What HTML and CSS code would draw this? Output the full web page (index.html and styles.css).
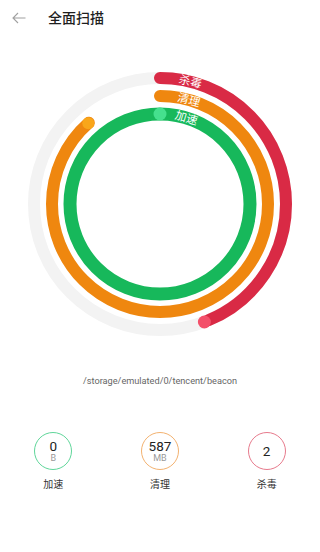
FILE: index.html
```html
<!DOCTYPE html>
<html lang="zh">
<head>
<meta charset="utf-8">
<link rel="stylesheet" href="styles.css">
</head>
<body>
<div class="app">
  <header class="header">
    <svg class="back" width="14" height="12" viewBox="0 0 14 12">
      <path d="M13.5 6H1M6 1L1 6l5 5" fill="none" stroke="#a0a0a0" stroke-width="1.1"/>
    </svg>
    <h1 class="title">全面扫描</h1>
  </header>
  <div class="chart">
    <svg width="280" height="280" viewBox="0 0 280 280">
      <circle cx="140" cy="140" r="126" fill="none" stroke="#f3f3f3" stroke-width="12"/>
      <circle cx="140" cy="140" r="126" fill="none" stroke="#d92a45" stroke-width="12" stroke-linecap="round" stroke-dasharray="346 1000" transform="rotate(-90 140 140)"/>
      <circle cx="140" cy="140" r="108" fill="none" stroke="#ef870f" stroke-width="12" stroke-linecap="round" stroke-dasharray="600.2 1000" transform="rotate(-90 140 140)"/>
      <circle cx="140" cy="140" r="90" fill="none" stroke="#17b85b" stroke-width="13"/>
      <circle cx="140" cy="50" r="6.5" fill="#45e08e"/>
      <circle cx="68.3" cy="59.2" r="6" fill="#f9a61a"/>
      <circle cx="184.4" cy="258" r="6.5" fill="#f3506a"/>
      <text class="ring-label" x="140" y="18" text-anchor="middle" transform="rotate(14 140 140)">杀毒</text>
      <text class="ring-label" x="140" y="36" text-anchor="middle" transform="rotate(15.5 140 140)">清理</text>
      <text class="ring-label" x="140" y="54" text-anchor="middle" transform="rotate(17 140 140)">加速</text>
    </svg>
  </div>
  <p class="path">/storage/emulated/0/tencent/beacon</p>
  <div class="stats">
    <div class="stat">
      <div class="ring ring-green"><span class="num">0</span><span class="unit">B</span></div>
      <span class="label">加速</span>
    </div>
    <div class="stat">
      <div class="ring ring-orange"><span class="num">587</span><span class="unit">MB</span></div>
      <span class="label">清理</span>
    </div>
    <div class="stat">
      <div class="ring ring-red"><span class="num">2</span></div>
      <span class="label">杀毒</span>
    </div>
  </div>
</div>
</body>
</html>
```

FILE: styles.css
```css
* { box-sizing: border-box; }
html, body {
  margin: 0;
  padding: 0;
  background: #fff;
  font-family: Roboto, "Noto Sans CJK SC", sans-serif;
  color: #222;
}
.app {
  width: 320px;
  height: 552px;
  display: flex;
  flex-direction: column;
}
.header {
  height: 36px;
  display: flex;
  align-items: center;
  padding-left: 12px;
}
.back { display: block; }
.title {
  margin: 0 0 0 22px;
  font-size: 14px;
  font-weight: 500;
  color: #1e1e1e;
  line-height: 20px;
}
.chart {
  margin-top: 28px;
  display: flex;
  justify-content: center;
}
.chart svg { display: block; }
.ring-label {
  fill: #fff;
  font-size: 11.5px;
  font-family: "Noto Sans CJK SC", sans-serif;
}
.path {
  margin: 30px 0 0;
  text-align: center;
  font-size: 9.2px;
  line-height: 14px;
  color: #666;
}
.stats {
  margin-top: 44px;
  display: grid;
  grid-template-columns: repeat(3, 1fr);
}
.stat {
  display: flex;
  flex-direction: column;
  align-items: center;
}
.ring {
  width: 38px;
  height: 38px;
  border-radius: 50%;
  border: 1px solid;
  display: flex;
  flex-direction: column;
  align-items: center;
  justify-content: center;
}
.ring-green { border-color: #5fd69a; }
.ring-orange { border-color: #f3b270; }
.ring-red { border-color: #e77a8c; }
.num {
  font-size: 13.5px;
  line-height: 14px;
  color: #222;
}
.unit {
  font-size: 9px;
  line-height: 10px;
  color: #999;
}
.label {
  margin-top: 8px;
  font-size: 10px;
  line-height: 14px;
  color: #333;
}
```
